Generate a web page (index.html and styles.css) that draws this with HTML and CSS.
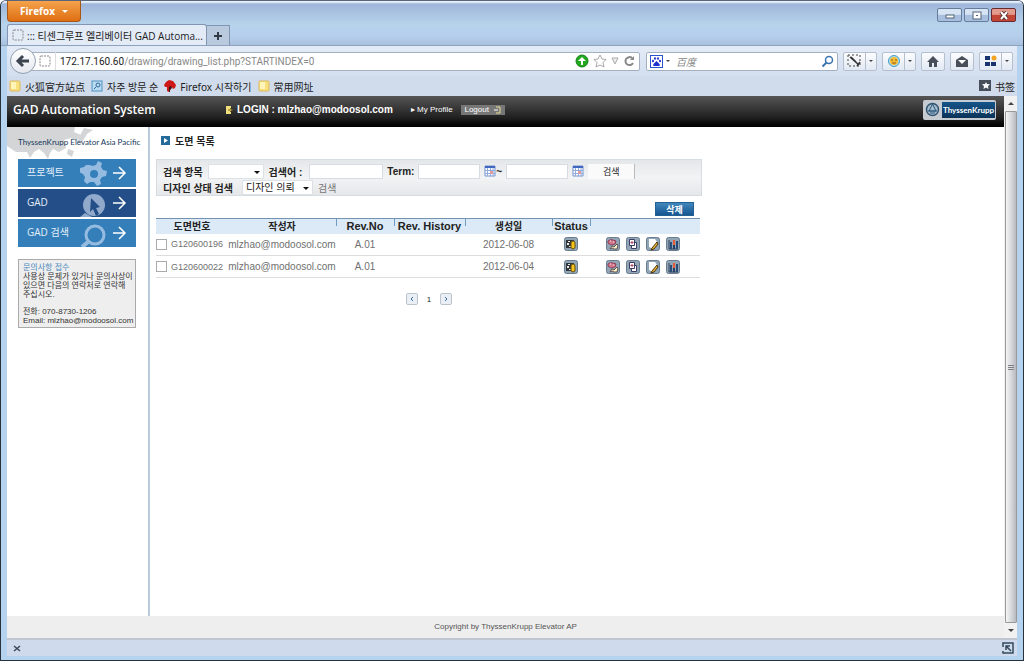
FILE: index.html
```html
<!DOCTYPE html>
<html lang="ko">
<head>
<meta charset="utf-8">
<title>GAD Automation System</title>
<link rel="stylesheet" href="styles.css">
</head>
<body>
<svg class="defs" aria-hidden="true">
  <symbol id="folder" viewBox="0 0 12 12"><path d="M1 2q0-1 1-1h8q1 0 1 1v8q0 1-1 1H2q-1 0-1-1z" fill="#f8e07c" stroke="#dcb95c"/><path d="M2 2h5v7H2z" fill="#fff5b8"/></symbol>
  <symbol id="dashed" viewBox="0 0 12 12"><rect x="1" y="1" width="10" height="10" rx="1" fill="none" stroke="#888" stroke-dasharray="2 1"/></symbol>
  <symbol id="calendar" viewBox="0 0 12 12"><path d="M1 1h10v10H1z" fill="#fff" stroke="#7391cf"/><path d="M1 1h10v2H1z" fill="#4068c0"/><path d="M1 5.5h10M1 8.5h10M3.500 3v8M6.500 3v8M9 3v8" stroke="#91aae0"/><path d="M6 6h3v3H6z" fill="#df9b9d"/></symbol>
  <symbol id="tile" viewBox="0 0 14 14"><rect x=".5" y=".5" width="13" height="13" rx="2" fill="#91a5b5" stroke="#687d90"/></symbol>
  <symbol id="status" viewBox="0 0 14 14"><use href="#tile"/><path d="M2 3h8v8H2z" fill="#32343c"/><path d="M4 4h2v1H4zM3 6h2v2H3zM5 9h2v1H5z" fill="#e9e9e0"/><path d="M7 6q0-2 2-2t2 2v5l-2 1-2-1z" fill="#f5c31b" stroke="#69500b"/></symbol>
  <symbol id="approve" viewBox="0 0 14 14"><use href="#tile"/><path d="M2 4q2-2 5-1l3 1-1 3-4 1-3-2z" fill="#d1798f" stroke="#923c54"/><path d="M4 4h1M7 5h1" stroke="#fbe3e8"/><path d="M6 9l2 1 3-3 1 1-1 4H8l-2-1-2 1z" fill="#fff4c8" stroke="#60504e"/></symbol>
  <symbol id="copy" viewBox="0 0 14 14"><use href="#tile"/><path d="M5.500 5.500h5v6h-5z" fill="#fff" stroke="#3b3b63"/><path d="M3.500 2.500h5v6h-5z" fill="#fff" stroke="#3b3b63"/><path d="M4.500 5.500h3M6 4v3" stroke="#b3425e"/></symbol>
  <symbol id="edit" viewBox="0 0 14 14"><use href="#tile"/><path d="M3 2h6l2 3-4 7-4-2z" fill="#fff"/><path d="M6 11l5-6 1 2-4 5-3 1z" fill="#eeb52c" stroke="#4a3413"/></symbol>
  <symbol id="chart" viewBox="0 0 14 14"><use href="#tile"/><path d="M3 3v9h9" fill="none" stroke="#303d57"/><path d="M4 5h2v7H4zM10 4h2v8h-2z" fill="#274c7a"/><path d="M7 3h2v5H7z" fill="#e65c38"/><path d="M7 8h2v4H7z" fill="#273f65"/></symbol>
</svg>
<div class="window">
  <header class="titlebar">
    <div class="topline">
      <button class="firefox">Firefox <i class="down light"></i></button>
      <div class="wincontrols">
        <button aria-label="Minimize"><svg width="12" height="9"><rect x="2" y="4" width="8" height="3" fill="#fff" stroke="#536478"/></svg></button>
        <button aria-label="Maximize"><svg width="12" height="9"><rect x="2" y="1" width="8" height="7" fill="#fff" stroke="#536478"/><path d="M5 4h2v1H5z" fill="#536478"/></svg></button>
        <button class="close" aria-label="Close"><svg width="12" height="9"><path d="M3 1l6 7M9 1L3 8" stroke="#583136" stroke-width="4"/><path d="M3 1l6 7M9 1L3 8" stroke="#fff" stroke-width="2"/></svg></button>
      </div>
    </div>
    <div class="tabs">
      <div class="tab"><svg class="i12"><use href="#dashed"/></svg><span>::: 티센그루프 엘리베이터 GAD Automa...</span></div>
      <button class="newtab" aria-label="New tab"><svg width="10" height="10"><path d="M5 1v8M1 5h8" stroke="#333b46" stroke-width="2"/></svg></button>
    </div>
  </header>
  <nav class="navbar">
    <button class="back" aria-label="Back"><svg width="16" height="14"><path d="M14 7H4M8 2L3 7l5 5" fill="none" stroke="#3c444f" stroke-width="3"/></svg></button>
    <div class="address">
      <span class="identity"><svg class="i12"><use href="#dashed"/></svg></span>
      <span class="url"><b>172.17.160.60</b>/drawing/drawing_list.php?STARTINDEX=0</span>
      <svg width="14" height="14"><circle cx="7" cy="7" r="6" fill="#22a91e" stroke="#16801a"/><path d="M7 3l4 4H8v4H6V7H3z" fill="#fff"/></svg>
      <svg width="14" height="14"><path d="M7 1l2 4 4 .5-3 3 1 4.500-4-2-4 2 1-4.500-3-3L5 5z" fill="#fff" stroke="#a8a8a8"/></svg>
      <svg width="8" height="8"><path d="M1 1h6L4 7z" fill="#eee" stroke="#aaa"/></svg>
      <svg width="12" height="12"><path d="M9 3A4 4 0 1 0 10 8" fill="none" stroke="#888" stroke-width="2"/><path d="M7 5h4V1z" fill="#888"/></svg>
    </div>
    <div class="search">
      <svg width="13" height="13"><rect x=".5" y=".5" width="12" height="12" fill="#fff" stroke="#2852d0"/><g fill="#1f30d0"><ellipse cx="3" cy="6" rx="1" ry="1.300"/><ellipse cx="5" cy="3.500" rx="1" ry="1.300"/><ellipse cx="8" cy="3.500" rx="1" ry="1.300"/><ellipse cx="10" cy="6" rx="1" ry="1.300"/><path d="M6.500 6l3 3q1 2-1 2h-4q-2 0-1-2z"/></g></svg>
      <i class="down small"></i>
      <input aria-label="Search" placeholder="百度">
      <svg width="13" height="13"><circle cx="8" cy="5" r="3.500" fill="none" stroke="#3b73af" stroke-width="1.500"/><path d="M5.500 7.500L1.500 11.500" stroke="#3b73af" stroke-width="2"/></svg>
    </div>
    <div class="tools">
      <button class="tool wide" aria-label="Capture"><span><svg width="16" height="14"><rect x="1" y="1" width="12" height="11" fill="none" stroke="#444" stroke-dasharray="2 2"/><path d="M3 3l9 8M4 3l5 5M10 12l3-4" fill="none" stroke="#333" stroke-width="1.500"/></svg></span><i class="down"></i></button>
      <button class="tool wide" aria-label="Account"><span><svg width="14" height="14"><circle cx="7" cy="7" r="5.500" fill="#a8dced" stroke="#4b9cc8"/><circle cx="7" cy="7" r="4" fill="#f6be32"/><path d="M4 6h2M8 6h2M5 9h4" stroke="#8b551e"/></svg></span><i class="down"></i></button>
      <button class="tool" aria-label="Home"><svg width="14" height="13"><path d="M7 1L1 7h2v5h3V8h2v4h3V7h2z" fill="#484f58"/></svg></button>
      <button class="tool" aria-label="Mail"><svg width="14" height="13"><path d="M1 5l6-4 6 4v7H1z" fill="#484f58"/><path d="M3 5h8L7 9z" fill="#fff"/></svg></button>
      <button class="tool wide" aria-label="Add-ons"><span><svg width="14" height="14"><path d="M1 2h5v4H1zM1 8h5v4H1zM7 8h5v4H7z" fill="#19356d"/><circle cx="10" cy="4" r="2.500" fill="#f3a421"/></svg></span><i class="down"></i></button>
    </div>
  </nav>
  <nav class="bookmarks">
    <a href="#"><svg class="i12"><use href="#folder"/></svg><span class="sc">火狐官方站点</span></a>
    <a href="#"><svg class="i12" viewBox="0 0 12 12"><rect x="1" y="1" width="10" height="10" fill="#b9dcf3" stroke="#4f91c1"/><circle cx="7" cy="5" r="2" fill="none" stroke="#2f6595"/><path d="M5 7L3 9" stroke="#2f6595"/></svg>자주 방문 순</a>
    <a href="#"><svg class="i12" viewBox="0 0 12 12"><path d="M0 5l2-3 3-2 4 1 3 4-1 3-2 1-1-2-2 3-1 2-2-1V7H1z" fill="#ce1717"/><path d="M5 7l2-1 1 2-2 2v2H5z" fill="#411716"/></svg>Firefox 시작하기</a>
    <a href="#"><svg class="i12"><use href="#folder"/></svg><span class="sc">常用网址</span></a>
    <a class="right" href="#"><svg class="i12" viewBox="0 0 12 12"><path d="M0 0h12v11H0z" fill="#454e5a"/><path d="M7 2l1 2 3 .3-2 2L9.500 9 7 7.500 4.500 9 5 6.300l-2-2L6 4z" fill="#fff"/></svg><span class="sc">书签</span></a>
  </nav>
  <div class="viewport">
    <div class="page">
      <header class="masthead">
        <h1>GAD Automation System</h1>
        <p class="login"><svg width="8" height="10"><path d="M1 1h5v8H1z" fill="#f0df7e"/><path d="M3 5h5M5 3l2 2-2 2" fill="none" stroke="#7d671c"/></svg>LOGIN : mlzhao@modoosol.com</p>
        <a class="profile" href="#">▸ My Profile</a>
        <button class="logout">Logout <svg width="7" height="8"><path d="M2 1h4v6H2" fill="none" stroke="#e8dd98"/><path d="M0 4h4" stroke="#fff"/></svg></button>
        <div class="brand"><svg width="15" height="15"><circle cx="7.500" cy="7.500" r="6" fill="#a9bccd" stroke="#31536f" stroke-width="1.500"/><path d="M7.500 2L4 9h7zM3 9h9M5 11h5" fill="none" stroke="#27577d"/></svg><strong>ThyssenKrupp</strong></div>
      </header>
      <div class="columns">
        <aside class="side">
          <div class="region"><svg class="map" viewBox="0 0 92 32" aria-hidden="true"><path d="M0 0h68l-1 5 7 3-5 6-5-3-7 2 2 8-7 4-6-3-3 4-2 6-4-6-5-4-5 3-4 6-3-6H9l-9-6z" fill="#d3d5d7"/><path d="M77 1l9 2-6 4-6 10-4-3zM61 22l6 2-2 6-5-3z" fill="#d3d5d7"/></svg><span>ThyssenKrupp Elevator Asia Pacific</span></div>
          <nav class="menu">
            <a href="#"><span>프로젝트</span><svg width="27" height="28"><path d="M10 6l2 1 4-1 2-4 4 2-1 4 2 3 4 1-1 5-4 1-2 3 1 4-4 2-3-4h-4l-3 2-3-3 1-4-2-3-4-2 1-4 4-1 2-2z" fill="#95bce0"/><circle cx="14" cy="15" r="4" fill="#347fb9"/></svg><svg width="15" height="14"><path d="M1 7h12M7 1l6 6-6 6" fill="none" stroke="#fff" stroke-width="1.500"/></svg></a>
            <a class="on" href="#"><span>GAD</span><svg width="27" height="28"><circle cx="14" cy="16" r="11" fill="#91a9cb"/><path d="M5 24l-5 4h12z" fill="#91a9cb"/><path d="M11 9l9 9-4 1 3 6-3 2-3-7-3 3z" fill="#234e88"/></svg><svg width="15" height="14"><path d="M1 7h12M7 1l6 6-6 6" fill="none" stroke="#fff" stroke-width="1.500"/></svg></a>
            <a href="#"><span>GAD 검색</span><svg width="27" height="28"><circle cx="15" cy="16" r="9" fill="none" stroke="#95bce0" stroke-width="3"/><path d="M8 23l-6 5" stroke="#95bce0" stroke-width="4"/></svg><svg width="15" height="14"><path d="M1 7h12M7 1l6 6-6 6" fill="none" stroke="#fff" stroke-width="1.500"/></svg></a>
          </nav>
          <section class="contact"><h2>문의사항 접수</h2><p>사용상 문제가 있거나 문의사상이<br>있으면 다음의 연락처로 연락해<br>주십시오.</p><p>전화: 070-8730-1206<br>Email: mlzhao@modoosol.com</p></section>
        </aside>
        <main>
          <h2 class="title"><svg width="9" height="9"><rect width="9" height="9" fill="#246a9a"/><path d="M3 2l4 2.500L3 7z" fill="#fff"/></svg>도면 목록</h2>
          <form class="filters">
            <div class="line">
              <label for="field">검색 항목</label><span class="pick field"><select id="field"><option></option></select></span>
              <label for="word">검색어 :</label><input id="word" class="word">
              <label for="from">Term:</label><input id="from" class="date"><svg class="i12"><use href="#calendar"/></svg><span>~</span><input aria-label="Term end" class="date"><svg class="i12"><use href="#calendar"/></svg>
              <button class="find" type="button">검색</button>
            </div>
            <div class="line"><label for="state">디자인 상태 검색</label><span class="pick state"><select id="state"><option>디자인 의뢰</option></select></span><button class="plain" type="button">검색</button></div>
          </form>
          <div class="actions"><button>삭제</button></div>
          <table>
            <colgroup><col class="c1"><col class="c2"><col class="c3"><col class="c4"><col class="c5"><col class="c6"><col class="c7"></colgroup>
            <thead><tr><th>도면번호</th><th>작성자</th><th class="tick">Rev.No</th><th class="tick">Rev. History</th><th class="tick">생성일</th><th class="tick">Status</th><th class="tick"></th></tr></thead>
            <tbody>
              <tr><td><label class="num"><input type="checkbox">G120600196</label></td><td>mlzhao@modoosol.com</td><td>A.01</td><td></td><td>2012-06-08</td><td><svg class="i14"><use href="#status"/></svg></td><td><div class="acts"><svg class="i14"><use href="#approve"/></svg><svg class="i14"><use href="#copy"/></svg><svg class="i14"><use href="#edit"/></svg><svg class="i14"><use href="#chart"/></svg></div></td></tr>
              <tr><td><label class="num"><input type="checkbox">G120600022</label></td><td>mlzhao@modoosol.com</td><td>A.01</td><td></td><td>2012-06-04</td><td><svg class="i14"><use href="#status"/></svg></td><td><div class="acts"><svg class="i14"><use href="#approve"/></svg><svg class="i14"><use href="#copy"/></svg><svg class="i14"><use href="#edit"/></svg><svg class="i14"><use href="#chart"/></svg></div></td></tr>
            </tbody>
          </table>
          <div class="pager"><button aria-label="Previous"><svg width="6" height="6"><path d="M4 1L2 3l2 2" fill="none" stroke="#3b6d98"/></svg></button><span>1</span><button aria-label="Next"><svg width="6" height="6"><path d="M2 1l2 2-2 2" fill="none" stroke="#3b6d98"/></svg></button></div>
        </main>
      </div>
      <footer>Copyright by ThyssenKrupp Elevator AP</footer>
    </div>
    <div class="scroll"><i class="up"></i><div class="thumb"><svg width="6" height="7"><path d="M0 1.500h6M0 3.500h6M0 5.500h6" stroke="#7d8084"/></svg></div><i class="down"></i></div>
  </div>
  <div class="statusbar"><button aria-label="Close bar"><svg width="8" height="7"><path d="M1 1l6 5M7 1L1 6" stroke="#3c4959" stroke-width="1.500"/></svg></button><svg width="12" height="12"><path d="M1 5V1h10v10H1V9M9 9L4 4M4 8V4h4" fill="none" stroke="#34495e" stroke-width="1.500"/></svg></div>
</div>
</body>
</html>
```

FILE: styles.css
```css
* { box-sizing: border-box; }
body { margin: 0; font: 11px "Liberation Sans", "Noto Sans CJK KR", sans-serif; color: #222; }
button, input, select { font: inherit; color: inherit; padding: 0; margin: 0; border: 0; }
button { background: none; display: flex; align-items: center; justify-content: center; }
h1, h2, p { margin: 0; }
a { color: inherit; text-decoration: none; }
svg { flex: none; display: block; }
.defs { width: 0; height: 0; position: absolute; }
.i12 { width: 12px; height: 12px; }
.i14 { width: 14px; height: 14px; }
.down, .up { display: block; flex: none; border: 3px solid transparent; border-top-color: #444; border-bottom: 0; }
.up { border-top: 0; border-bottom: 3px solid #444; }
.light { border-top-color: #fff; }
.small { border-width: 2px 2px 0; }

.window { min-height: 100vh; display: flex; flex-direction: column; padding: 0 6px 4px; background: #b5d2ef; border: 1px solid #26323c; border-top-color: #596579; border-radius: 6px 6px 0 0; overflow: hidden; }
.titlebar { margin: 0 -6px; padding: 0 6px; background: linear-gradient(#e9f2fb 0 1px, #9fb6d9 3px, #b7d3ec 24px, #b5cfec 35px, #a9c1de); border-bottom: 1px solid #8fa2bd; }
.topline { display: flex; justify-content: space-between; height: 23px; }
.firefox { width: 74px; height: 21px; gap: 7px; color: #fff; font: bold 10px "Open Sans", sans-serif; background: linear-gradient(#f4a34c, #df6e12); border: 1px solid #a65716; border-top: 0; border-radius: 0 0 4px 4px; }
.wincontrols { display: flex; gap: 2px; padding: 7px 1px 0 0; }
.wincontrols button { width: 25px; height: 14px; border: 1px solid #667d9c; border-radius: 2px; background: linear-gradient(#d7e4f4 45%, #a7bfdc 50%); }
.wincontrols .close { background: linear-gradient(#e39b8d 45%, #c24536 50%); border-color: #6a2a30; }
.tabs { display: flex; align-items: flex-end; }
.tab { width: 200px; height: 21px; display: flex; align-items: center; gap: 3px; padding-left: 4px; white-space: nowrap; background: #e3ebf7; border: 1px solid #8296b3; border-bottom: 0; border-radius: 3px 3px 0 0; font: 10px "Open Sans", "Noto Sans CJK KR", sans-serif; }
.newtab { width: 23px; height: 20px; background: #b9cadf; border: 1px solid #8296b3; border-left: 0; border-bottom: 0; }

.navbar { height: 30px; display: flex; align-items: center; padding: 0 4px 0 3px; background: linear-gradient(#e3ebf7, #d3deef); }
.back { width: 26px; height: 26px; flex: none; border: 1px solid #929fae; border-radius: 50%; background: linear-gradient(#fff, #e4e8ef); z-index: 1; }
.address, .search { height: 19px; display: flex; align-items: center; background: #fff; border: 1px solid #a4afbf; border-radius: 2px; }
.address { flex: 1; min-width: 0; margin-left: -6px; gap: 4px; padding: 0 4px 0 8px; }
.identity { padding: 3px 4px 3px 0; border-right: 1px solid #ddd; }
.url { flex: 1; font: 10px Roboto, sans-serif; color: #888; white-space: nowrap; overflow: hidden; }
.url b { font-weight: normal; color: #222; }
.search { width: 192px; margin: 0 5px 0 6px; padding: 0 3px; gap: 3px; }
.search input { flex: 1; min-width: 0; background: none; padding-left: 3px; font: italic 10px "Noto Sans CJK SC", sans-serif; }
.search input::placeholder { color: #888; }
.tools { display: flex; gap: 5px; }
.tool { height: 19px; width: 24px; background: linear-gradient(#fbfcfe, #e2e9f3); border: 1px solid #b5c0cf; border-radius: 2px; }
.tool.wide { width: 34px; }
.wide span { flex: 1; height: 17px; display: flex; align-items: center; justify-content: center; border-right: 1px solid #b5c0cf; }
.tool .down { margin: 0 3px; border-width: 2px 2px 0; }

.bookmarks { height: 20px; display: flex; align-items: center; gap: 6px; padding: 0 2px; background: #d0dcec; font: 10px "Noto Sans", "Noto Sans CJK KR", sans-serif; white-space: nowrap; }
.bookmarks a { display: flex; align-items: center; gap: 4px; }
.bookmarks .right { margin-left: auto; }
.sc { font-family: "Noto Sans CJK SC", sans-serif; }

.viewport { flex: 1; display: flex; background: #fff; }
.page { flex: 1; min-width: 0; display: flex; flex-direction: column; }
.masthead { height: 31px; display: flex; align-items: center; padding: 0 8px 4px 6px; color: #fff; background: linear-gradient(#565656, #202020 70%, #080808 90%, #000); }
.masthead h1 { width: 212px; font: 600 12px "Open Sans", sans-serif; white-space: nowrap; }
.login { display: flex; gap: 4px; align-items: center; font-weight: bold; font-size: 10px; white-space: nowrap; }
.profile { margin-left: 18px; font-size: 8px; white-space: nowrap; }
.logout { height: 10px; width: 44px; margin-left: 8px; gap: 5px; font-size: 8px; background: #777; }
.brand { margin-left: auto; display: flex; align-items: center; gap: 2px; height: 20px; padding: 2px 1px 2px 2px; background: #c5cbd1; border-radius: 2px; }
.brand strong { padding: 0 1px; font: bold 8px/16px Lato, sans-serif; background: linear-gradient(#155489, #0b3358); }

.columns { flex: 1; display: flex; }
.side { width: 143px; flex: none; padding: 0 12px 0 11px; border-right: 2px solid #b8cbdc; }
.region { height: 32px; margin: 0 -10px 0 -11px; padding: 8px 0 0 11px; position: relative; font: 8px/14px Lato, sans-serif; color: #18395b; white-space: nowrap; }
.region span { position: relative; }
.map { position: absolute; left: 0; top: 0; width: 92px; height: 32px; }
.menu { display: grid; gap: 2px; }
.menu a { height: 28px; display: flex; align-items: center; gap: 5px; padding: 0 9px; overflow: hidden; color: #e3effa; background: #347fb9; font: 10px "Open Sans", "Noto Sans CJK KR", sans-serif; white-space: nowrap; }
.menu a.on { background: #234e88; }
.menu span { flex: 1; line-height: 20px; padding-bottom: 2px; }
.contact { margin-top: 12px; padding: 3px 4px 2px; background: #eee; border: 1px solid #aaa; font-size: 8px; line-height: 9px; color: #333; white-space: nowrap; }
.contact h2 { font: inherit; color: #4a89bd; }
.contact p + p { margin-top: 8px; }

main { width: 546px; margin-left: 6px; }
.title { display: flex; align-items: center; gap: 5px; height: 26px; padding-left: 5px; font-size: 10px; }
.filters { height: 37px; margin-top: 6px; padding: 3px 6px; background: linear-gradient(#e4e7e9, #f2f3f4 50%, #e5e7ea); border: 1px solid #d6dde2; font-weight: bold; font-size: 10px; }
.line { display: flex; align-items: center; height: 16px; white-space: nowrap; }
.pick { position: relative; display: block; height: 15px; }
.pick::after { content: ""; position: absolute; right: 4px; top: 7px; border: 3px solid transparent; border-top-color: #111; border-bottom: 0; pointer-events: none; }
.pick select { width: 100%; height: 100%; padding-left: 3px; appearance: none; background: #fff; border: 1px solid #dbe1e5; font-weight: normal; }
.field { width: 56px; margin: 0 5px; }
.state { width: 71px; margin: 0 5px 0 9px; }
.line input { height: 15px; background: #fff; border: 1px solid #d5dce4; }
.line .word { width: 74px; margin: 0 4px 0 7px; }
.line .date { width: 62px; margin: 0 4px; }
.find { width: 47px; height: 15px; margin-left: 4px; font-weight: normal; font-size: 9px; background: #fafafa; border-right: 1px solid #bbb; }
.plain { font-weight: normal; color: #777; }
.actions { display: flex; justify-content: flex-end; padding: 6px 8px 2px; }
.actions button { width: 39px; height: 14px; color: #fff; font-weight: bold; font-size: 9px; background: linear-gradient(#4287bc, #145692); border: 1px solid #235f91; }
table { width: 544px; table-layout: fixed; border-collapse: collapse; text-align: center; font-size: 10px; }
.c1 { width: 72px; } .c2 { width: 108px; } .c3 { width: 58px; } .c4 { width: 71px; } .c5 { width: 87px; } .c6 { width: 38px; } .c7 { width: 110px; }
th, td { padding: 0; white-space: nowrap; }
th { height: 15px; line-height: 13px; background: #dceaf7; border-top: 1px solid #7294b2; font-size: 11px; }
th:nth-child(1), th:nth-child(2), th:nth-child(5) { font-size: 10px; }
.tick { background: linear-gradient(#6f9bc5, #6f9bc5) 0 0 / 1px 7px no-repeat #dceaf7; }
td { height: 22px; color: #707070; border-bottom: 1px solid #ddd; }
td .i14 { margin: auto; }
.num { display: flex; align-items: center; gap: 4px; font-size: 9px; }
.num input { width: 11px; height: 11px; appearance: none; background: #fff; border: 1px solid #aaa; }
.acts { display: flex; justify-content: center; gap: 6px; padding-right: 4px; }
.acts .i14 { margin: 0; }
.pager { display: flex; align-items: center; justify-content: center; gap: 9px; margin-top: 15px; font-size: 8px; }
.pager button { width: 12px; height: 12px; background: #e9eff4; border: 1px solid #bbc4cc; border-radius: 2px; }
footer { height: 22px; background: #eee; text-align: center; font-size: 8px; line-height: 22px; color: #555; }
.scroll { width: 13px; flex: none; display: flex; flex-direction: column; align-items: center; justify-content: space-between; gap: 6px; padding: 6px 0; background: #f1f1f1; }
.thumb { width: 12px; flex: 1; display: flex; align-items: center; justify-content: center; background: linear-gradient(90deg, #f5f5f5, #d0d3d7 60%, #b6bac0); border: 1px solid #999; border-radius: 1px; }
.statusbar { height: 18px; display: flex; align-items: center; justify-content: space-between; padding: 0 3px 0 6px; background: #cfdbec; border-top: 2px solid #c0c6cf; }
```
